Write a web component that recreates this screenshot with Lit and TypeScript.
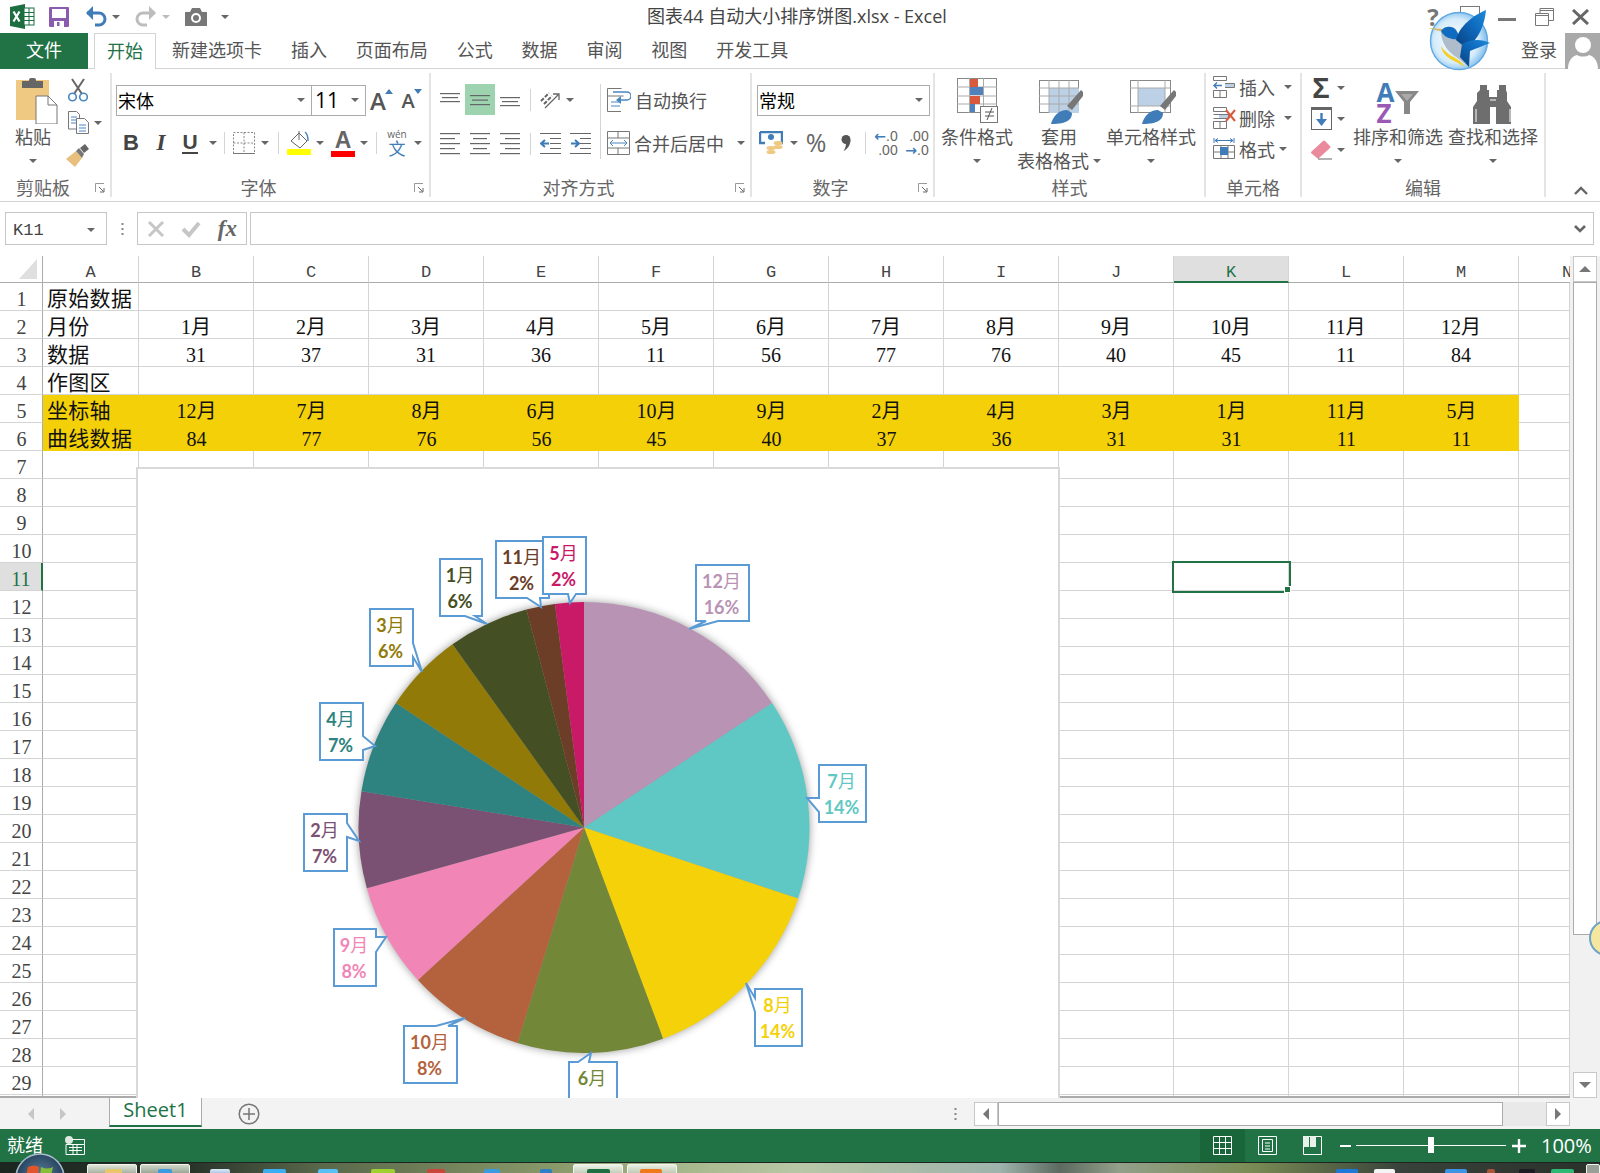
import { LitElement, html, svg, css } from 'lit';
import { customElement } from 'lit/decorators.js';

const COLS = ['A', 'B', 'C', 'D', 'E', 'F', 'G', 'H', 'I', 'J', 'K', 'L', 'M'];
const ROWS: Record<number, string[]> = {
  1: ['原始数据'],
  2: ['月份', '1月', '2月', '3月', '4月', '5月', '6月', '7月', '8月', '9月', '10月', '11月', '12月'],
  3: ['数据', '31', '37', '31', '36', '11', '56', '77', '76', '40', '45', '11', '84'],
  4: ['作图区'],
  5: ['坐标轴', '12月', '7月', '8月', '6月', '10月', '9月', '2月', '4月', '3月', '1月', '11月', '5月'],
  6: ['曲线数据', '84', '77', '76', '56', '45', '40', '37', '36', '31', '31', '11', '11'],
};

type Side = 'top' | 'right' | 'bottom' | 'left';
interface Slice {
  month: string;
  value: number;
  pct: string;
  color: string;
  box: [number, number, number, number];
  side: Side;
  base: [number, number];
  tip: [number, number];
}

// order is the sorted row 6 of the sheet
const SLICES: Slice[] = [
  { month: '12', value: 84, pct: '16%', color: '#b893b3', box: [696, 565, 749, 621], side: 'bottom', base: [706, 718], tip: [689, 629] },
  { month: '7', value: 77, pct: '14%', color: '#5fc8c4', box: [819, 765, 866, 822], side: 'left', base: [798, 812], tip: [807, 798] },
  { month: '8', value: 76, pct: '14%', color: '#f4d108', box: [755, 989, 802, 1046], side: 'left', base: [998, 1012], tip: [746, 983] },
  { month: '6', value: 56, pct: '', color: '#738738', box: [569, 1062, 617, 1119], side: 'top', base: [578, 589], tip: [591, 1053] },
  { month: '10', value: 45, pct: '8%', color: '#b4623d', box: [404, 1026, 457, 1083], side: 'top', base: [436, 448], tip: [465, 1018] },
  { month: '9', value: 40, pct: '8%', color: '#f186b6', box: [334, 929, 376, 986], side: 'right', base: [937, 952], tip: [386, 937] },
  { month: '2', value: 37, pct: '7%', color: '#7a5172', box: [304, 814, 347, 871], side: 'right', base: [823, 837], tip: [359, 841] },
  { month: '4', value: 36, pct: '7%', color: '#2e8380', box: [320, 703, 363, 760], side: 'right', base: [736, 750], tip: [375, 746] },
  { month: '3', value: 31, pct: '6%', color: '#917a07', box: [370, 609, 413, 666], side: 'right', base: [643, 657], tip: [422, 672] },
  { month: '1', value: 31, pct: '6%', color: '#454f24', box: [440, 559, 482, 616], side: 'bottom', base: [465, 475], tip: [487, 624] },
  { month: '11', value: 11, pct: '2%', color: '#6c3d27', box: [496, 541, 549, 598], side: 'bottom', base: [527, 540], tip: [541, 607] },
  { month: '5', value: 11, pct: '2%', color: '#c91a67', box: [543, 537, 586, 594], side: 'bottom', base: [568, 576], tip: [570, 603] },
];

const TASK_ITEMS = [
  { x: 87, w: 50, bg: 'linear-gradient(#dfe5d8,#9aa596)', k: 'btn' },
  { x: 105, w: 17, bg: '#e8c66a', k: 'ico' },
  { x: 140, w: 50, bg: 'linear-gradient(#cfd6c8,#8f9a8a)', k: 'btn' },
  { x: 158, w: 14, bg: '#3b9be0', k: 'ico' },
  { x: 210, w: 20, bg: 'linear-gradient(#dfeaf5,#4e86c5)', k: 'ico' },
  { x: 263, w: 23, bg: '#3aaef0', k: 'ico' },
  { x: 318, w: 20, bg: '#58c0f4', k: 'ico' },
  { x: 371, w: 24, bg: '#9ed030', k: 'ico' },
  { x: 427, w: 18, bg: '#c9463a', k: 'ico' },
  { x: 484, w: 16, bg: '#3b9be0', k: 'ico' },
  { x: 540, w: 12, bg: '#2f7fc8', k: 'ico' },
  { x: 573, w: 50, bg: 'linear-gradient(#eef2e8,#b9c4ae)', k: 'btn' },
  { x: 587, w: 23, bg: '#1d6f42', k: 'ico' },
  { x: 627, w: 50, bg: 'linear-gradient(#e9eee2,#b6c1aa)', k: 'btn' },
  { x: 640, w: 22, bg: '#ee7a1c', k: 'ico' },
  { x: 1336, w: 22, bg: '#1e78d8', k: 'ico' },
  { x: 1374, w: 21, bg: '#f4f4f4', k: 'ico' },
  { x: 1445, w: 22, bg: '#3c94e4', k: 'ico' },
  { x: 1487, w: 8, bg: '#a8553c', k: 'ico' },
  { x: 1519, w: 16, bg: '#1c1c22', k: 'ico' },
  { x: 1551, w: 23, bg: '#2fb874', k: 'ico' },
  { x: 1586, w: 14, bg: '#9a9f98', k: 'btn' },
];

const arr = html`<i class="arr"></i>`;
const sep = html`<i class="vsep"></i>`;

function hlines(w: number, h: number, list: number[][], color = '#666') {
  return html`<svg width=${w} height=${h} viewBox="0 0 ${w} ${h}">
    ${list.map(([x1, x2, y]) => svg`<rect x=${x1} y=${y} width=${x2 - x1} height="1.2" fill=${color}></rect>`)}
  </svg>`;
}

const launcher = html`<svg class="launch" width="10" height="10" viewBox="0 0 10 10">
  <path d="M.5 9V.5H9" fill="none" stroke="#999"></path><path d="M4 4l4.5 4.5M9 5v4H5" fill="none" stroke="#666"></path>
</svg>`;

const ICONS = {
  excel: html`<svg width="25" height="25" viewBox="0 0 25 25">
    <path d="M0 3L15 0V25L0 22Z" fill="#1d6f42"></path>
    <rect x="14" y="4" width="10" height="17" fill="#fff" stroke="#1d6f42"></rect>
    <path d="M14 8.5h10M14 12.5h10M14 16.5h10M19 4v17" stroke="#1d6f42"></path>
    <path d="M3.5 7.5l6 10M9.5 7.5l-6 10" stroke="#fff" stroke-width="2.2"></path>
  </svg>`,
  save: html`<svg width="20" height="20" viewBox="0 0 20 20">
    <path d="M0 1a1 1 0 011-1h18a1 1 0 011 1v18a1 1 0 01-1 1H1a1 1 0 01-1-1Z" fill="#8b5cae"></path>
    <rect x="3" y="2" width="14" height="9" fill="#fff"></rect><rect x="5" y="14" width="10" height="6" fill="#fff"></rect>
    <rect x="8" y="15" width="2.5" height="4" fill="#8b5cae"></rect>
  </svg>`,
  undo: html`<svg width="22" height="22" viewBox="0 0 22 22">
    <path d="M2 7h12a6 6 0 010 12h-4" fill="none" stroke="#3f7cb8" stroke-width="3"></path><path d="M8 0L1 7l7 7z" fill="#3f7cb8"></path>
  </svg>`,
  redo: html`<svg width="22" height="22" viewBox="0 0 22 22">
    <path d="M20 7H8a6 6 0 000 12h4" fill="none" stroke="#bdbdbd" stroke-width="3"></path><path d="M14 0l7 7-7 7z" fill="#bdbdbd"></path>
  </svg>`,
  camera: html`<svg width="22" height="18" viewBox="0 0 22 18">
    <path d="M0 4h5l2-4h8l2 4h5v14H0Z" fill="#777"></path><circle cx="11" cy="10" r="5" fill="#fff"></circle><circle cx="11" cy="10" r="3" fill="#777"></circle>
  </svg>`,
  paste: html`<svg width="42" height="46" viewBox="0 0 42 46">
    <path d="M0 8h33v40H0Z" fill="#efc881" transform="translate(0 -6)"></path>
    <rect x="6" y="3" width="21" height="7" fill="#666"></rect><rect x="13" y="0" width="7" height="6" rx="2" fill="#666"></rect>
    <path d="M20 18h12l9 9v19H20Z" fill="#fff" stroke="#777"></path><path d="M32 18v9h9" fill="none" stroke="#777"></path>
  </svg>`,
  scissors: html`<svg width="20" height="24" viewBox="0 0 20 24">
    <path d="M4 1l10 15M16 1L6 16" stroke="#666" stroke-width="2"></path>
    <circle cx="4.5" cy="19" r="3.8" fill="none" stroke="#4a86c0" stroke-width="1.6"></circle>
    <circle cx="15.5" cy="19" r="3.8" fill="none" stroke="#4a86c0" stroke-width="1.6"></circle>
  </svg>`,
  copy: html`<svg width="21" height="23" viewBox="0 0 21 23">
    <path d="M.5.5h8l3 3V18H.5Z" fill="#fff" stroke="#777"></path><path d="M3 6h6M3 9h6M3 12h6" stroke="#4a86c0"></path>
    <path d="M8.5 7.5h8l4 4v11h-12Z" fill="#fff" stroke="#777"></path><path d="M11 14h7M11 17h7M11 20h7" stroke="#4a86c0"></path>
  </svg>`,
  brush: html`<svg width="24" height="23" viewBox="0 0 24 23">
    <path d="M0 15L10 7l6 7-7 9Z" fill="#e9bf7e"></path><path d="M10 7l3-3 5 6-2 4Z" fill="#777"></path><path d="M14 4l5-4 4 5-5 4Z" fill="#666"></path>
  </svg>`,
  border: html`<svg width="22" height="22" viewBox="0 0 22 22">
    <path d="M.5.5h21v21H.5ZM11 .5v21M.5 11h21" fill="none" stroke="#888" stroke-dasharray="2 1.5"></path><path d="M0 21.5h22" stroke="#777"></path>
  </svg>`,
  fill: html`<svg width="24" height="25" viewBox="0 0 24 25">
    <path d="M4 11l8-8 8 8-7 7Z" fill="#fff" stroke="#666"></path><path d="M12 1v9" stroke="#666"></path>
    <path d="M18 2c3 2 3 6 3 9" fill="none" stroke="#4a86c0" stroke-width="1.5"></path><rect y="19" width="24" height="6" fill="#ffff00"></rect>
  </svg>`,
  orient: html`<svg width="20" height="20" viewBox="0 0 20 20">
    <path d="M1 11l8-8M4 14l8-8" stroke="#666" stroke-width="2" stroke-dasharray="4 1.5"></path>
    <path d="M5 18L18 5M13 4h6v6" fill="none" stroke="#666" stroke-width="1.3"></path>
  </svg>`,
  wrap: html`<svg width="24" height="24" viewBox="0 0 24 24">
    <path d="M.5.5h14M.5.5V23.5H14M.5 8h16" fill="none" stroke="#777"></path><path d="M4 14h9M4 18h9" stroke="#4a86c0"></path>
    <path d="M6 4h14a3 3 0 010 8h-8" fill="none" stroke="#4a86c0" stroke-width="1.5"></path><path d="M14 8l-5 4 5 4z" fill="#4a86c0"></path>
  </svg>`,
  merge: html`<svg width="23" height="24" viewBox="0 0 23 24">
    <path d="M.5.5h22v23H.5ZM.5 7h22M.5 17h22M11 .5V7M11 17v6.5" fill="none" stroke="#777"></path>
    <path d="M3 12h17M6 9l-3 3 3 3M17 9l3 3-3 3" fill="none" stroke="#4a86c0"></path>
  </svg>`,
  acct: html`<svg width="24" height="24" viewBox="0 0 24 24">
    <path d="M1 1h22v11H18M6 12H1V1" fill="none" stroke="#3f7cb8" stroke-width="2.4"></path><circle cx="12" cy="6" r="3" fill="#3f7cb8"></circle>
    <ellipse cx="19" cy="12" rx="4.5" ry="2" fill="#efc881"></ellipse><ellipse cx="19" cy="16" rx="4.5" ry="2" fill="#efc881"></ellipse>
    <ellipse cx="12" cy="17" rx="4.5" ry="2" fill="#efc881"></ellipse><ellipse cx="12" cy="21" rx="4.5" ry="2" fill="#efc881"></ellipse>
  </svg>`,
  comma: html`<svg width="10" height="16" viewBox="0 0 10 16">
    <circle cx="5" cy="4.5" r="4.5" fill="#555"></circle><path d="M9.5 5c0 5-3 9-7 11 2-3 3-6 2-9z" fill="#555"></path>
  </svg>`,
  cond: html`<svg width="41" height="46" viewBox="0 0 41 46">
    <rect x=".5" y=".5" width="39" height="34" fill="#fff" stroke="#888"></rect>
    <path d="M12.5 0v35M26.5 0v35M0 9h40M0 18h40M0 26h40" stroke="#aaa"></path>
    <rect x="13" y="1" width="8" height="8" fill="#d9593d"></rect><rect x="13" y="9" width="13" height="8" fill="#4f81bd"></rect>
    <rect x="13" y="18" width="10" height="8" fill="#d9593d"></rect><rect x="13" y="26" width="5" height="8" fill="#4f81bd"></rect>
    <rect x="23.5" y="28.5" width="17" height="16" fill="#fff" stroke="#777"></rect>
    <path d="M28 34h9M28 38h9M35 30l-5 12" stroke="#555"></path>
  </svg>`,
  table: html`<svg width="44" height="44" viewBox="0 0 44 44">
    <rect x=".5" y=".5" width="39" height="32" fill="#fff" stroke="#888"></rect><rect x="10" y="8" width="30" height="25" fill="#bcd0e6"></rect>
    <path d="M10 0v33M20 0v33M30 0v33M0 8h40M0 16h40M0 24h40" stroke="#aaa"></path>
    <path d="M28 26l14-16 2 2v4L33 30Z" fill="#777"></path><path d="M12 44c2-8 8-14 16-14l5 3c0 6-4 11-21 11Z" fill="#3f7cb8"></path>
  </svg>`,
  style: html`<svg width="46" height="44" viewBox="0 0 46 44">
    <rect x=".5" y=".5" width="40" height="32" fill="#fff" stroke="#888"></rect><rect x="8" y="8" width="27" height="18" fill="#bcd0e6"></rect>
    <path d="M8 0v33M35 0v33M0 8h40M0 26h40" stroke="#aaa"></path>
    <path d="M30 26l14-16 2 2v4L35 30Z" fill="#777"></path><path d="M12 44c2-8 8-14 16-14l5 3c0 6-4 11-21 11Z" fill="#3f7cb8"></path>
  </svg>`,
  insert: html`<svg width="22" height="22" viewBox="0 0 22 22">
    <path d="M.5.5h13v4H.5ZM.5 14.5h13v7H.5ZM7 14.5v7M12 7.5h9.5v4H12" fill="none" stroke="#777"></path><rect x="12" y="8" width="9" height="3" fill="#bcd0e6"></rect>
    <path d="M9 9.5H1M4 6.5l-3 3 3 3" fill="none" stroke="#3f7cb8" stroke-width="1.4"></path>
  </svg>`,
  del: html`<svg width="23" height="22" viewBox="0 0 23 22">
    <path d="M.5.5h13v4H.5ZM.5 14.5h13v7H.5ZM7 14.5v7M.5 7.5h15v4H.5" fill="none" stroke="#777"></path><rect x="6" y="8" width="9" height="3" fill="#bcd0e6"></rect>
    <path d="M13 3l9 11M22 3l-9 11" stroke="#d9593d" stroke-width="2"></path>
  </svg>`,
  format: html`<svg width="22" height="24" viewBox="0 0 22 24">
    <path d="M1 1v5M21 1v5M2 3.5h18M5 1.5l-3 2 3 2M17 1.5l3 2-3 2" fill="none" stroke="#3f7cb8"></path>
    <path d="M.5 8.5h21v13H.5ZM8 8.5v13M15 8.5v13M.5 15h21" fill="none" stroke="#777"></path><rect x="7" y="10" width="8" height="8" fill="#3f7cb8"></rect>
  </svg>`,
  down: html`<svg width="21" height="23" viewBox="0 0 21 23">
    <rect x=".5" y=".5" width="20" height="22" fill="#fff" stroke="#666"></rect><rect width="21" height="3" fill="#666"></rect>
    <path d="M10.5 6v11" stroke="#3f7cb8" stroke-width="2.4"></path><path d="M5 12l5.5 7 5.5-7z" fill="#3f7cb8"></path>
  </svg>`,
  eraser: html`<svg width="21" height="20" viewBox="0 0 21 20">
    <path d="M0 12L12 1q1-1 2 0l5 5q1 1 0 2L8 18q-1 1-2 0L0 13z" fill="#ea8a9c"></path><path d="M7 19h14" stroke="#666"></path>
  </svg>`,
  funnel: html`<svg width="24" height="23" viewBox="0 0 24 23">
    <path d="M0 0h24l-9 11v12H9V11Z" fill="#888"></path><path d="M6 3h12l-6 7z" fill="#aaa"></path>
  </svg>`,
  binoculars: html`<svg width="42" height="39" viewBox="0 0 42 39">
    <path d="M8 0h7v5h2v7h8V5h2V0h7v5l1 3v8l4 6v17H24V22H18v17H1V22l4-6V8l3-3Z" fill="#6e6e6e"></path>
    <path d="M4 24v13M38 24v13M18 15h6" stroke="#fff"></path>
  </svg>`,
  person: html`<svg width="35" height="36" viewBox="0 0 35 36">
    <rect width="35" height="36" fill="#a9a9a9"></rect><circle cx="18" cy="12" r="8" fill="#fff"></circle>
    <path d="M3 36c0-9 5-13 9-14 3 2 9 2 12 0 4 1 9 5 9 14Z" fill="#fff"></path>
  </svg>`,
  bird: html`<svg class="bird" width="72" height="66" viewBox="1424 6 72 66">
    <defs>
      <radialGradient id="orb" cx=".45" cy=".5" r=".55"><stop offset="0" stop-color="#fff"></stop><stop offset=".7" stop-color="#d6ecfb"></stop><stop offset="1" stop-color="#7dbcec"></stop></radialGradient>
      <linearGradient id="wing" x1="0" y1="1" x2="1" y2="0"><stop offset="0" stop-color="#08407f"></stop><stop offset=".6" stop-color="#0f6cc0"></stop><stop offset="1" stop-color="#1e8ad8"></stop></linearGradient>
    </defs>
    <circle cx="1459" cy="41" r="28.5" fill="url(#orb)" stroke="#5ea8e4" stroke-width="1.4"></circle>
    <path d="M1428 28l15 1v3z" fill="#d9b765"></path>
    <path d="M1441 31c3-5 11-6 15-1 3 5 5 10 7 16l6 21-10-8c-10-6-18-15-18-28z" fill="#aebccb"></path>
    <path d="M1441 31c3-5 11-6 15-1l5 9c-7 1-16 0-20-8z" fill="#0f6cc0"></path>
    <path d="M1441 46c5 9 15 11 21 17l3 4c-8-6-22-8-24-21z" fill="#f3cf28"></path>
    <path d="M1456 40c3-14 18-25 30-30-1 13-7 30-20 38z" fill="url(#wing)"></path>
    <path d="M1462 44c9-5 20-5 28-1-8 3-15 6-20 8l-1 16-9-10z" fill="url(#wing)"></path>
  </svg>`,
  orb: html`<svg class="orb" width="50" height="50" viewBox="0 0 50 50">
    <defs><radialGradient id="glass" cx=".5" cy=".45" r=".55"><stop offset="0" stop-color="#5a7f9c"></stop><stop offset="1" stop-color="#1f3a55"></stop></radialGradient></defs>
    <circle cx="25" cy="25" r="24" fill="url(#glass)" stroke="#a8bccb" stroke-width="1.6"></circle>
    <path d="M13 14q6-3 11 0l-1 9q-6-3-12 0Z" fill="#e2552b"></path>
    <path d="M26 14q6 3 12 0l-2 9q-6 3-11 0Z" fill="#86bf3a"></path>
  </svg>`,
};

@customElement('app-root')
export class AppRoot extends LitElement {
  static styles = css`
    :host {
      --green: #217346;
      display: block;
      position: relative;
      width: 1600px;
      height: 1173px;
      overflow: hidden;
      background: #fff;
      color: #555;
      font: 18px 'Open Sans', 'Noto Sans CJK SC', sans-serif;
    }
    svg { display: block; flex: none; }
    .arr {
      display: block;
      width: 0;
      height: 0;
      border: 4px solid transparent;
      border-top-color: #666;
      border-bottom-width: 0;
    }
    .vsep { display: block; width: 1px; height: 22px; background: #d4d4d4; }
    .bird { position: absolute; left: 1424px; top: 6px; }

    /* title bar */
    .titlebar { display: flex; align-items: center; height: 33px; }
    .qat { display: flex; align-items: center; width: 647px; flex: none; padding-left: 10px; box-sizing: border-box; }
    .qat .i-save { margin-left: 14px; }
    .qat .i-undo { margin-left: 16px; }
    .qat .a1 { margin-left: 5px; }
    .qat .i-redo { margin-left: 15px; }
    .qat .i-cam { margin-left: 15px; }
    .qat .a2 { margin-left: 14px; }
    .qat .i-redo-a .arr { border-top-color: #bbb; }
    .title { color: #444; white-space: nowrap; font-size: 18px; line-height: 33px; }
    .win { margin-left: auto; display: flex; align-items: center; color: #777; }
    .help { font: bold 24px 'Open Sans', sans-serif; width: 24px; margin-right: 15px; color: #777; text-align: center; }
    .ropt { width: 20px; height: 14px; box-sizing: border-box; border: 1px solid #777; margin-right: 18px; margin-top: -8px; }
    .min { width: 18px; height: 3px; background: #777; margin-right: 19px; margin-top: 6px; }
    .close { margin: 0 11px 0 18px; }

    /* tabs */
    .tabs { display: flex; height: 36px; box-sizing: border-box; border-bottom: 1px solid #d4d4d4; gap: 28.9px; line-height: 34px; white-space: nowrap; }
    .tab-file { width: 88px; height: 36px; background: var(--green); color: #fff; text-align: center; }
    .tab-home {
      width: 62px;
      height: 36px;
      box-sizing: border-box;
      margin: 0 -12.9px 0 -22.9px;
      border: 1px solid #d4d4d4;
      border-bottom: 0;
      background: #fff;
      color: var(--green);
      text-align: center;
    }
    .account { margin-left: auto; display: flex; gap: 8px; color: #555; }

    /* ribbon */
    .ribbon { display: flex; height: 133px; box-sizing: border-box; padding-top: 4px; border-bottom: 1px solid #d4d4d4; }
    .group { display: flex; flex-direction: column; height: 124px; box-sizing: border-box; border-right: 2px solid #e4e4e4; flex: none; }
    .body { height: 106px; }
    .glabel { display: grid; grid-template-columns: 1fr 24px; height: 18px; line-height: 18px; align-items: center; justify-items: center; color: #666; }
    .glabel.wide { grid-template-columns: 1fr; }
    .launch { justify-self: start; margin-left: 9px; }
    .w1 { width: 112px; }
    .w2 { width: 319px; }
    .w3 { width: 321px; }
    .w4 { width: 183px; }
    .w5 { width: 271px; }
    .w6 { width: 96px; }
    .w7 { width: 244px; }
    .big { display: grid; grid-template-rows: 52px 24px 24px; justify-items: center; align-items: center; line-height: 24px; white-space: nowrap; }
    .big .icon { align-self: end; padding-bottom: 1px; }
    .two { display: flex; align-items: center; gap: 4px; }
    .row { display: grid; align-items: center; justify-items: center; height: 31px; }

    .g1 { display: grid; grid-template-columns: 66px 24px 16px; grid-template-rows: repeat(3, 33px); align-items: center; justify-items: center; }
    .g1 .big { grid-row: 1 / 4; }
    .g1 .big .icon { padding-left: 7px; }
    .r21, .r22, .r41 { padding-left: 4px; }
    .r21 { grid-template-columns: 196px 54px 30px 30px; margin-top: 12px; }
    .r22 { grid-template-columns: 30px 30px 28px 18px 4px 36px 6px 20px 22px 20px 26px 16px 8px 34px 8px; margin-top: 11px; }
    .sel {
      width: 100%;
      height: 31px;
      box-sizing: border-box;
      border: 1px solid #ababab;
      padding: 0 6px 2px 1px;
      display: flex;
      align-items: center;
      justify-content: space-between;
      color: #000;
      font-size: 18px;
      background: #fff;
    }
    .sizebox { margin-left: -1px; width: calc(100% + 1px); font-size: 21px; padding-left: 3px; }
    .grow { position: relative; font-size: 24px; font-weight: 600; color: #555; line-height: 31px; padding-right: 6px; }
    .grow.small { font-size: 20px; }
    .grow svg { position: absolute; right: -1px; top: 3px; }
    .bold { font: bold 22px 'Liberation Sans', sans-serif; color: #444; }
    .ital { font: italic bold 23px 'Liberation Serif', serif; color: #444; }
    .under { font: bold 21px 'Liberation Sans', sans-serif; color: #444; border-bottom: 2px solid #444; line-height: 20px; }
    .fcolor { display: flex; flex-direction: column; align-items: center; width: 24px; font: bold 23px/22px 'Liberation Sans', sans-serif; color: #666; }
    .fcolor i { display: block; width: 24px; height: 6px; background: #ff0000; }
    .wen { display: flex; flex-direction: column; align-items: center; line-height: 12px; font-size: 10px; color: #666; }
    .wen b { font-weight: 400; font-size: 17px; line-height: 17px; color: #3f7cb8; }

    .g3 { display: flex; padding-left: 4px; }
    .al-left { width: 165px; margin-top: 11px; height: 75px; border-right: 1px solid #d4d4d4; flex: none; }
    .r31 { grid-template-columns: 30px 30px 30px 10px 30px 10px; height: 31px; }
    .r32 { grid-template-columns: 30px 30px 30px 10px 30px 30px; height: 31px; margin-top: 13px; }
    .mid { background: #9dd3ae; width: 30px; height: 31px; display: flex; align-items: center; justify-content: center; }
    .al-right { padding-left: 6px; margin-top: 11px; white-space: nowrap; }
    .line { display: flex; align-items: center; gap: 4px; height: 31px; }
    .line + .line { margin-top: 12px; }
    .line .arr { margin-left: 9px; }
    .r40 { margin: 12px 0 0 5px; width: 173px; height: 31px; }
    .r41 { grid-template-columns: 30px 16px 28px 32px 6px 36px 26px; margin-top: 11px; }
    .pct { font-size: 25px; color: #666; line-height: 31px; }
    .dec { font: 14px/14px 'Liberation Sans', sans-serif; color: #666; text-align: right; white-space: nowrap; }
    .dec b { color: #3f7cb8; font: bold 14px/14px 'DejaVu Sans', sans-serif; }
    .g5 { display: grid; grid-template-columns: 72px 92px 92px; padding-left: 6px; }
    .g5 .big:nth-child(n + 2) .icon { padding-left: 4px; }
    .g6 { padding-left: 7px; margin-top: -2px; height: 108px; }
    .cellrow { display: grid; grid-template-columns: 26px 38px 24px; height: 31px; align-items: center; justify-items: start; }
    .cellrow .arr { justify-self: center; margin-right: 2px; }
    .cellrow.fmt .arr { margin-right: 12px; }
    .g7 { display: grid; grid-template-columns: 40px 90px 90px; column-gap: 5px; padding-left: 6px; }
    .edit { display: grid; grid-template-columns: 26px 14px; grid-auto-rows: 31px; align-items: center; justify-items: center; margin-top: -1px; }
    .sigma { font: bold 29px/30px 'Liberation Sans', sans-serif; color: #444; }
    .az { display: flex; align-items: flex-end; gap: 1px; }
    .az div { font: bold 26px/21px 'Open Sans', sans-serif; color: #3f7cb8; }
    .az div b { display: block; color: #9b59b6; font-weight: 700; }
    .az svg { margin-bottom: 10px; }
    .collapse { margin: 113px 0 0 27px; }

    /* formula bar */
    .fbar { display: flex; height: 33px; margin-top: 10px; padding-left: 5px; }
    .box { border: 1px solid #c6c6c6; box-sizing: border-box; display: flex; align-items: center; }
    .name { width: 102px; padding: 3px 11px 0 7px; justify-content: space-between; font: 17px 'Liberation Mono', monospace; color: #444; }
    .dots { width: 30px; display: flex; justify-content: center; align-items: center; }
    .tools { width: 110px; justify-content: space-between; padding: 0 9px; }
    .fx { font: italic bold 23px 'Liberation Serif', serif; color: #666; }
    .input { width: 1344px; margin-left: 3px; justify-content: flex-end; padding-right: 6px; }

    /* sheet */
    .sheet { position: relative; display: flex; height: 842px; margin-top: 11px; overflow: hidden; }
    .grid {
      display: grid;
      grid-template-columns: 43px 96px repeat(12, 115px) 51px;
      grid-template-rows: 27px repeat(29, 28px) 3px;
      flex: none;
      width: 1570px;
      border-bottom: 2px solid #ababab;
      box-sizing: border-box;
      overflow: hidden;
      color: #111;
    }
    .grid > div { box-sizing: border-box; border-right: 1px solid #d4d4d4; border-bottom: 1px solid #d4d4d4; min-width: 0; white-space: nowrap; }
    .corner { display: flex; align-items: flex-end; justify-content: flex-end; padding: 0 5px 3px 0; border-bottom-color: #ababab !important; border-right-color: #ababab !important; }
    .grid > .ch { font: 17px/33px 'Liberation Mono', monospace; color: #444; text-align: center; border-bottom-color: #ababab; overflow: hidden; }
    .grid > .ch.hit { background: #dfdfdf; color: var(--green); border-bottom: 2px solid var(--green); }
    .grid > .ch.n { text-align: left; padding-left: 43px; border-right: 0; }
    .grid > .rh { font: 20px/32px 'Liberation Serif', serif; color: #444; text-align: center; border-right-color: #ababab; padding-left: 1px; }
    .grid > .rh.hit { background: #dfdfdf; color: var(--green); border-right: 2px solid var(--green); }
    .c { font: 20px/33px 'Liberation Serif', 'Noto Sans CJK SC', serif; text-align: center; }
    .c.a { font-size: 21px; text-align: left; padding-left: 4px; letter-spacing: .3px; }
    .grid > .c.y { background: #f3d008; border-color: #f3d008; border-right: 0; }
    .grid > .c.sel-cell { position: relative; outline: 2px solid var(--green); outline-offset: 0; }
    .sel-cell::after { content: ''; position: absolute; right: -3px; bottom: -3px; width: 5px; height: 5px; background: var(--green); border: 1px solid #fff; }
    .chart-frame { position: absolute; left: 136px; top: 211px; width: 924px; height: 631px; box-sizing: border-box; border: 2px solid #d9d9d9; border-bottom: 0; background: #fff; }
    .chart-frame svg { margin: -2px; }
    .pie { filter: drop-shadow(0 0 4px rgba(0, 0, 0, .4)); }
    .cb { fill: #fff; stroke: #5b9bd5; stroke-width: 2; }
    .lb { font: 700 18px Lato, 'Noto Sans CJK SC', sans-serif; text-anchor: middle; }
    .lb .m { font-family: 'Noto Sans CJK SC', sans-serif; font-weight: 400; }

    .vbar { width: 30px; flex: none; position: relative; display: flex; flex-direction: column; align-items: center; background: #f1f1f1; }
    .sbtn { width: 24px; height: 26px; box-sizing: border-box; border: 1px solid #c8c8c8; background: #fff; display: flex; align-items: center; justify-content: center; flex: none; }
    .thumb { width: 24px; height: 653px; box-sizing: border-box; border: 1px solid #ababab; background: #fff; flex: none; }
    .track { flex: 1; }
    .tri-u { width: 0; height: 0; border: 6px solid transparent; border-bottom: 6px solid #777; border-top: 0; }
    .tri-d { width: 0; height: 0; border: 6px solid transparent; border-top: 6px solid #777; border-bottom: 0; }
    .ball { position: absolute; left: 19px; top: 664px; width: 36px; height: 36px; box-sizing: border-box; border-radius: 50%; border: 2px solid #6ea3c8; background: #f5e6a0; }

    /* sheet tabs */
    .stabs { display: flex; align-items: center; height: 31px; background: #f3f3f3; position: relative; }
    .nav { display: grid; grid-template-columns: 32px 32px; width: 109px; box-sizing: border-box; padding-left: 15px; justify-items: center; }
    .tri-l { width: 0; height: 0; border: 6px solid transparent; border-right: 6px solid #c6c6c6; border-left: 0; }
    .tri-r { width: 0; height: 0; border: 6px solid transparent; border-left: 6px solid #c6c6c6; border-right: 0; }
    .tri-l.dk { border-right-color: #777; }
    .tri-r.dk { border-left-color: #777; }
    .stab {
      width: 93px;
      height: 29px;
      margin-bottom: 2px;
      box-sizing: border-box;
      background: #fff;
      border: 1px solid #ababab;
      border-top: 0;
      border-bottom: 2px solid var(--green);
      color: var(--green);
      font-size: 20px;
      line-height: 24px;
      text-align: center;
    }
    .plus { margin-left: 36px; }
    .sdots { margin-left: 684px; margin-right: 8px; width: 22px; display: flex; justify-content: center; }
    .hbtn { width: 24px; height: 24px; box-sizing: border-box; border: 1px solid #c8c8c8; background: #fff; display: flex; align-items: center; justify-content: center; flex: none; }
    .hthumb { width: 505px; height: 24px; box-sizing: border-box; border: 1px solid #ababab; background: #fff; flex: none; }
    .htrack { width: 43px; height: 24px; background: #e9e9e9; flex: none; }

    /* status */
    .status { display: flex; align-items: center; height: 33px; background: var(--green); color: #fff; padding-left: 7px; }
    .ready { margin-top: -4px; }
    .status .macro { margin-left: 21px; }
    .views { margin-left: auto; display: flex; align-items: center; height: 33px; }
    .view { width: 45px; height: 33px; display: flex; align-items: center; justify-content: center; }
    .view.on { background: #19663b; }
    .zoom { display: flex; align-items: center; margin-left: 5px; }
    .z-m { width: 11px; height: 2px; background: #fff; margin-right: 5px; }
    .slider { position: relative; width: 150px; height: 1px; background: #fff; }
    .knob { position: absolute; left: 72px; top: -8px; width: 6px; height: 16px; background: #fff; }
    .z-p { margin-left: 6px; }
    .pctz { width: 59px; margin-left: 15px; font-size: 20px; white-space: nowrap; }

    /* task bar */
    .taskbar {
      position: relative;
      height: 11px;
      border-top: 1px solid #1c2620;
      box-sizing: border-box;
      background: linear-gradient(90deg, #1c2620 0, #28332a 190px, #59684a 320px, #8a9a6a 560px, #a9b98e 690px, #b8c7a6 800px, #9eb3ac 1000px, #5c6a60 1060px, #93a08a 1120px, #7a8c55 1250px, #39423a 1400px, #2a302a 1600px);
    }
    .tb-item { position: absolute; height: 12px; box-sizing: border-box; border-radius: 2px 2px 0 0; }
    .tb-item.btn { top: 1px; border: 1px solid #f0f4ec; }
    .tb-item.ico { top: 6px; }
    .orb { position: absolute; left: 15px; top: -10px; }
  `;

  renderRibbon() {
    return html`<div class="ribbon">
      <section class="group w1">
        <div class="body g1">
          <div class="big">
            <span class="icon">${ICONS.paste}</span><span>粘贴</span>${arr}
          </div>
          ${ICONS.scissors}<span></span>${ICONS.copy}${arr}${ICONS.brush}<span></span>
        </div>
        <footer class="glabel"><span>剪贴板</span>${launcher}</footer>
      </section>

      <section class="group w2">
        <div class="body">
          <div class="row r21">
            <div class="sel"><span>宋体</span>${arr}</div>
            <div class="sel sizebox"><span>11</span>${arr}</div>
            <span class="grow">A<svg width="8" height="6" viewBox="0 0 8 6"><path d="M0 6l4-5 4 5z" fill="#3f7cb8"></path></svg></span>
            <span class="grow small">A<svg width="8" height="6" viewBox="0 0 8 6"><path d="M0 1l4 5 4-5z" fill="#3f7cb8"></path></svg></span>
          </div>
          <div class="row r22">
            <span class="bold">B</span><span class="ital">I</span><span class="under">U</span>${arr}${sep}
            ${ICONS.border}${arr}${sep}${ICONS.fill}${arr}
            <span class="fcolor">A<i></i></span>${arr}${sep}
            <span class="wen">wén<b>文</b></span>${arr}
          </div>
        </div>
        <footer class="glabel"><span>字体</span>${launcher}</footer>
      </section>

      <section class="group w3">
        <div class="body g3">
          <div class="al-left">
            <div class="row r31">
              ${hlines(20, 14, [[0, 20, 0], [2, 18, 4], [0, 20, 8]])}
              <span class="mid">${hlines(20, 12, [[0, 20, 1], [2, 18, 5.5], [0, 20, 10]])}</span>
              ${hlines(20, 14, [[0, 20, 4], [2, 18, 8], [0, 20, 12]])}
              ${sep}${ICONS.orient}${arr}
            </div>
            <div class="row r32">
              ${hlines(20, 22, [[0, 20, 0], [0, 15, 5], [0, 20, 10], [0, 15, 15], [0, 20, 20]])}
              ${hlines(20, 22, [[0, 20, 0], [3, 17, 5], [0, 20, 10], [3, 17, 15], [0, 20, 20]])}
              ${hlines(20, 22, [[0, 20, 0], [5, 20, 5], [0, 20, 10], [5, 20, 15], [0, 20, 20]])}
              ${sep}
              <svg width="21" height="22" viewBox="0 0 21 22"><path d="M0 .5h21M10 5.5h11M10 10.5h11M10 15.5h11M0 20.5h21" stroke="#666"></path><path d="M9 10.5H2M5 7l-4 3.5L5 14" fill="none" stroke="#3f7cb8" stroke-width="2"></path></svg>
              <svg width="21" height="22" viewBox="0 0 21 22"><path d="M0 .5h21M10 5.5h11M10 10.5h11M10 15.5h11M0 20.5h21" stroke="#666"></path><path d="M1 10.5h7M5 7l4 3.5L5 14" fill="none" stroke="#3f7cb8" stroke-width="2"></path></svg>
            </div>
          </div>
          <div class="al-right">
            <div class="line">${ICONS.wrap}<span>自动换行</span></div>
            <div class="line">${ICONS.merge}<span>合并后居中</span>${arr}</div>
          </div>
        </div>
        <footer class="glabel"><span>对齐方式</span>${launcher}</footer>
      </section>

      <section class="group w4">
        <div class="body">
          <div class="sel r40"><span>常规</span>${arr}</div>
          <div class="row r41">
            ${ICONS.acct}${arr}<span class="pct">%</span>${ICONS.comma}${sep}
            <span class="dec"><b>←</b>.0<br />.00</span>
            <span class="dec">.00<br /><b>→</b>.0</span>
          </div>
        </div>
        <footer class="glabel"><span>数字</span>${launcher}</footer>
      </section>

      <section class="group w5">
        <div class="body g5">
          <div class="big"><span class="icon">${ICONS.cond}</span><span>条件格式</span>${arr}</div>
          <div class="big"><span class="icon">${ICONS.table}</span><span>套用</span><span class="two">表格格式${arr}</span></div>
          <div class="big"><span class="icon">${ICONS.style}</span><span>单元格样式</span>${arr}</div>
        </div>
        <footer class="glabel wide"><span>样式</span></footer>
      </section>

      <section class="group w6">
        <div class="body g6">
          <div class="cellrow">${ICONS.insert}<span>插入</span>${arr}</div>
          <div class="cellrow">${ICONS.del}<span>删除</span>${arr}</div>
          <div class="cellrow fmt">${ICONS.format}<span>格式</span>${arr}</div>
        </div>
        <footer class="glabel wide"><span>单元格</span></footer>
      </section>

      <section class="group w7">
        <div class="body g7">
          <div class="edit">
            <span class="sigma">Σ</span>${arr}${ICONS.down}${arr}${ICONS.eraser}${arr}
          </div>
          <div class="big">
            <span class="icon az"><div>A<b>Z</b></div>${ICONS.funnel}</span><span>排序和筛选</span>${arr}
          </div>
          <div class="big"><span class="icon">${ICONS.binoculars}</span><span>查找和选择</span>${arr}</div>
        </div>
        <footer class="glabel wide"><span>编辑</span></footer>
      </section>

      <svg class="collapse" width="16" height="10" viewBox="0 0 16 10"><path d="M2 8l6-6 6 6" fill="none" stroke="#666" stroke-width="2.4"></path></svg>
    </div>`;
  }

  renderChart() {
    const total = SLICES.reduce((s, d) => s + d.value, 0);
    const cx = 584;
    const cy = 827.5;
    const r = 225.5;
    let acc = 0;
    const wedges = SLICES.map((d) => {
      const a0 = (acc / total) * Math.PI * 2;
      acc += d.value;
      const a1 = (acc / total) * Math.PI * 2;
      const large = a1 - a0 > Math.PI ? 1 : 0;
      const p = (a: number) => `${cx + r * Math.sin(a)} ${cy - r * Math.cos(a)}`;
      return svg`<path d="M${cx} ${cy}L${p(a0)}A${r} ${r} 0 ${large} 1 ${p(a1)}Z" fill=${d.color}></path>`;
    });
    // 5月 sits on top of 11月 in the original chart
    const callouts = SLICES.map((d) => {
      const [x1, y1, x2, y2] = d.box;
      const [b1, b2] = d.base;
      const tip = d.tip.join(',');
      const pts: Record<Side, string> = {
        top: `${x1},${y1} ${b1},${y1} ${tip} ${b2},${y1} ${x2},${y1} ${x2},${y2} ${x1},${y2}`,
        right: `${x1},${y1} ${x2},${y1} ${x2},${b1} ${tip} ${x2},${b2} ${x2},${y2} ${x1},${y2}`,
        bottom: `${x1},${y1} ${x2},${y1} ${x2},${y2} ${b2},${y2} ${tip} ${b1},${y2} ${x1},${y2}`,
        left: `${x1},${y1} ${x2},${y1} ${x2},${y2} ${x1},${y2} ${x1},${b2} ${tip} ${x1},${b1}`,
      };
      const mx = (x1 + x2) / 2 - 1;
      return svg`<polygon class="cb" points=${pts[d.side]}></polygon>
        <text class="lb" x=${mx} y=${y1 + 23} fill=${d.color}>${d.month}<tspan class="m">月</tspan></text>
        ${d.pct ? svg`<text class="lb" x=${mx} y=${y1 + 49} fill=${d.color}>${d.pct}</text>` : ''}`;
    });
    return html`<div class="chart-frame">
      <svg width="924" height="631" viewBox="136 467 924 631">
        <g class="pie">${wedges}</g>
        ${callouts}
      </svg>
    </div>`;
  }

  renderGrid() {
    const cells = [];
    cells.push(html`<div class="corner"><svg width="18" height="20" viewBox="0 0 18 20"><path d="M18 0V20H0Z" fill="#dfdfdf"></path></svg></div>`);
    COLS.forEach((c) => cells.push(html`<div class="ch ${c === 'K' ? 'hit' : ''}">${c}</div>`));
    cells.push(html`<div class="ch n">N</div>`);
    for (let r = 1; r <= 30; r++) {
      const data = ROWS[r] ?? [];
      const yellow = r === 5 || r === 6;
      cells.push(html`<div class="rh ${r === 11 ? 'hit' : ''}">${r <= 29 ? r : ''}</div>`);
      COLS.forEach((c, i) => {
        const cls = ['c', i === 0 ? 'a' : '', yellow ? 'y' : '', r === 11 && c === 'K' ? 'sel-cell' : ''].join(' ');
        cells.push(html`<div class=${cls}>${data[i] ?? ''}</div>`);
      });
      cells.push(html`<div class="c"></div>`);
    }
    return html`<div class="grid">${cells}</div>`;
  }

  render() {
    const dots = html`<svg width="3" height="12" viewBox="0 0 3 12"><path d="M1.5 0v2M1.5 5v2M1.5 10v2" stroke="#888" stroke-width="2"></path></svg>`;
    return html`
      <div class="titlebar">
        <div class="qat">
          ${ICONS.excel}<span class="i-save">${ICONS.save}</span><span class="i-undo">${ICONS.undo}</span><span class="a1">${arr}</span>
          <span class="i-redo">${ICONS.redo}</span><span class="a1 i-redo-a">${arr}</span>
          <span class="i-cam">${ICONS.camera}</span><span class="a2">${arr}</span>
        </div>
        <div class="title">图表44 自动大小排序饼图.xlsx - Excel</div>
        <div class="win">
          <span class="help">?</span><span class="ropt"></span><span class="min"></span>
          <svg width="19" height="18" viewBox="0 0 19 18"><path d="M.5 5.5h13v12H.5ZM5 5V.5h13.5v12H14M0 7.5h14M5 2.5h14" fill="none" stroke="#777"></path></svg>
          <svg class="close" width="17" height="16" viewBox="0 0 17 16"><path d="M1 1l15 14M16 1L1 15" stroke="#666" stroke-width="3"></path></svg>
        </div>
      </div>

      <nav class="tabs">
        <div class="tab-file">文件</div>
        <div class="tab-home">开始</div>
        <span>新建选项卡</span><span>插入</span><span>页面布局</span><span>公式</span><span>数据</span><span>审阅</span><span>视图</span><span>开发工具</span>
        <div class="account"><span>登录</span>${ICONS.person}</div>
      </nav>

      ${this.renderRibbon()}

      <div class="fbar">
        <div class="box name"><span>K11</span>${arr}</div>
        <div class="dots">${dots}</div>
        <div class="box tools">
          <svg width="18" height="18" viewBox="0 0 18 18"><path d="M2 2l14 14M16 2L2 16" stroke="#c6c6c6" stroke-width="3"></path></svg>
          <svg width="20" height="18" viewBox="0 0 20 18"><path d="M2 9l6 6L18 3" fill="none" stroke="#c6c6c6" stroke-width="4"></path></svg>
          <span class="fx">fx</span>
        </div>
        <div class="box input">
          <svg width="14" height="10" viewBox="0 0 14 10"><path d="M2 2l5 5 5-5" fill="none" stroke="#666" stroke-width="2.6"></path></svg>
        </div>
      </div>

      <div class="sheet">
        ${this.renderGrid()}
        ${this.renderChart()}
        <aside class="vbar">
          <div class="sbtn"><i class="tri-u"></i></div>
          <div class="thumb"></div>
          <div class="track"></div>
          <div class="sbtn"><i class="tri-d"></i></div>
          <i class="ball"></i>
        </aside>
      </div>

      <div class="stabs">
        <div class="nav"><i class="tri-l"></i><i class="tri-r"></i></div>
        <div class="stab">Sheet1</div>
        <svg class="plus" width="22" height="22" viewBox="0 0 22 22"><circle cx="11" cy="11" r="9.8" fill="none" stroke="#777" stroke-width="1.5"></circle><path d="M11 5v12M5 11h12" stroke="#777" stroke-width="1.5"></path></svg>
        <div class="sdots">${dots}</div>
        <div class="hbtn"><i class="tri-l dk"></i></div>
        <div class="hthumb"></div>
        <div class="htrack"></div>
        <div class="hbtn"><i class="tri-r dk"></i></div>
      </div>

      <footer class="status">
        <span class="ready">就绪</span>
        <svg class="macro" width="21" height="19" viewBox="0 0 21 19">
          <circle cx="5" cy="4" r="4" fill="#dfe9e2"></circle>
          <path d="M2 8.5h18.5V18.5H2ZM8 3.5h12.5v5M5 11.5h13M5 14.5h13M9 9v9M13 9v9" fill="none" stroke="#fff"></path>
        </svg>
        <div class="views">
          <div class="view on"><svg width="19" height="19" viewBox="0 0 19 19"><path d="M.5.5h18v18H.5ZM6.5 0v19M12.5 0v19M0 6.5h19M0 12.5h19" fill="none" stroke="#fff"></path></svg></div>
          <div class="view"><svg width="19" height="19" viewBox="0 0 19 19"><path d="M.5.5h18v18H.5ZM4.5 3.5h10v12h-10ZM7 7h5M7 10h5M7 13h5" fill="none" stroke="#fff"></path></svg></div>
          <div class="view"><svg width="19" height="19" viewBox="0 0 19 19"><path d="M.5.5h18v18H.5Z" fill="none" stroke="#fff"></path><path d="M0 0h6v11H0ZM7 0h6v11H7Z" fill="#e8f0ea"></path></svg></div>
          <div class="zoom">
            <i class="z-m"></i>
            <div class="slider"><i class="knob"></i></div>
            <svg class="z-p" width="14" height="14" viewBox="0 0 14 14"><path d="M7 0v14M0 7h14" stroke="#fff" stroke-width="2.4"></path></svg>
            <span class="pctz">100%</span>
          </div>
        </div>
      </footer>

      <div class="taskbar">
        ${TASK_ITEMS.map((t) => html`<i class="tb-item ${t.k}" style="left:${t.x}px;width:${t.w}px;background:${t.bg}"></i>`)}
        ${ICONS.orb}
      </div>
      ${ICONS.bird}
    `;
  }
}
